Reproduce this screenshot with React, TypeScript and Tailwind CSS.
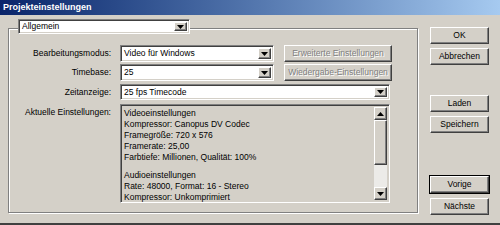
import React from "react";

const raised =
  "border border-t-white border-l-white border-r-[#404040] border-b-[#404040] shadow-[inset_-1px_-1px_0_#808080] bg-[#d4d0c8]";
const sunken =
  "border border-t-[#808080] border-l-[#808080] border-r-white border-b-white shadow-[inset_1px_1px_0_#404040,inset_-1px_-1px_0_#d4d0c8]";

function Arrow({ up = false }: { up?: boolean }) {
  return (
    <svg width="7" height="4" viewBox="0 0 7 4" className="block">
      <path d={up ? "M3.5 0 L7 4 L0 4 Z" : "M0 0 L7 0 L3.5 4 Z"} fill="#000" />
    </svg>
  );
}

function Combo({ value, w, h = 17 }: { value: string; w: number; h?: number }) {
  return (
    <div className={`${sunken} bg-white flex items-stretch p-[2px] shrink-0`} style={{ width: w, height: h }}>
      <div className="flex-1 flex items-center pl-[1px] leading-none whitespace-nowrap overflow-hidden">{value}</div>
      <div className={`${raised} w-[13px] flex items-center justify-center`}>
        <Arrow />
      </div>
    </div>
  );
}

function Btn({ label, disabled = false, isDefault = false }: { label: string; disabled?: boolean; isDefault?: boolean }) {
  return (
    <div
      className={`${raised} h-[17px] flex items-center justify-center leading-none whitespace-nowrap ${
        disabled ? "text-[#808080] [text-shadow:1px_1px_0_#fff]" : "text-black"
      } ${isDefault ? "outline outline-1 outline-black" : ""}`}
    >
      {label}
    </div>
  );
}

const lines = [
  "Videoeinstellungen",
  "Kompressor: Canopus DV Codec",
  "Framegröße: 720 x 576",
  "Framerate: 25,00",
  "Farbtiefe: Millionen, Qualität: 100%",
  "",
  "Audioeinstellungen",
  "Rate: 48000, Format: 16 - Stereo",
  "Kompressor: Unkomprimiert",
];

export default function App() {
  return (
    <div className="w-[500px] h-[225px] bg-[#d4d0c8] font-['Liberation_Sans',Arial,sans-serif] text-[8.5px] text-black flex flex-col overflow-hidden border-b-2 border-[#404040]">
      <div className="h-[15px] shrink-0 bg-gradient-to-r from-[#0a246a] to-[#a6caf0] pl-[3px] flex items-center text-white font-bold text-[9px] leading-none">
        Projekteinstellungen
      </div>

      <div className="flex flex-1">
        <div className="pl-[8px] pt-[13px]">
          <div className="w-[410px] h-[185px] border border-[#808080] shadow-[1px_1px_0_#fff,inset_1px_1px_0_#fff] pl-[9px]">
            <div className="-mt-[10px]">
              <Combo value="Allgemein" w={172} h={15} />
            </div>

            <div className="mt-[11px] flex flex-col gap-[2px]">
              <div className="flex items-center">
                <div className="w-[94px] text-right pr-[1px]">Bearbeitungsmodus:</div>
                <div className="ml-[8px]">
                  <Combo value="Video für Windows" w={154} />
                </div>
                <div className="ml-[10px] w-[108px]">
                  <Btn label="Erweiterte Einstellungen" disabled />
                </div>
              </div>

              <div className="flex items-center">
                <div className="w-[94px] text-right pr-[1px]">Timebase:</div>
                <div className="ml-[8px]">
                  <Combo value="25" w={154} />
                </div>
                <div className="ml-[10px] w-[108px]">
                  <Btn label="Wiedergabe-Einstellungen" disabled />
                </div>
              </div>

              <div className="flex items-center mt-[1px]">
                <div className="w-[94px] text-right pr-[1px]">Zeitanzeige:</div>
                <div className="ml-[8px]">
                  <Combo value="25 fps Timecode" w={270} h={16} />
                </div>
              </div>

              <div className="flex items-start mt-[2px]">
                <div className="w-[94px] text-right pr-[1px] pt-[3px] leading-[11px]">Aktuelle Einstellungen:</div>
                <div className={`${sunken} ml-[8px] w-[270px] h-[99px] flex p-[2px]`}>
                  <div className="flex-1 pl-[1px] pt-[1px] leading-[11px] whitespace-nowrap">
                    {lines.map((l, i) => (
                      <div key={i} className={l ? "h-[11px]" : "h-[7px]"}>{l}</div>
                    ))}
                  </div>
                  <div className="w-[13px] flex flex-col bg-[#ecebe8]">
                    <div className={`${raised} h-[13px] flex items-center justify-center`}>
                      <Arrow up />
                    </div>
                    <div className={`${raised} h-[45px]`} />
                    <div className="flex-1" />
                    <div className={`${raised} h-[13px] flex items-center justify-center`}>
                      <Arrow />
                    </div>
                  </div>
                </div>
              </div>
            </div>
          </div>
        </div>

        <div className="ml-[12px] pt-[12px] w-[59px] flex flex-col">
          <Btn label="OK" />
          <div className="mt-[4px]">
            <Btn label="Abbrechen" />
          </div>
          <div className="mt-[30px]">
            <Btn label="Laden" />
          </div>
          <div className="mt-[4px]">
            <Btn label="Speichern" />
          </div>
          <div className="mt-[43px]">
            <Btn label="Vorige" isDefault />
          </div>
          <div className="mt-[5px]">
            <Btn label="Nächste" />
          </div>
        </div>
      </div>
    </div>
  );
}
